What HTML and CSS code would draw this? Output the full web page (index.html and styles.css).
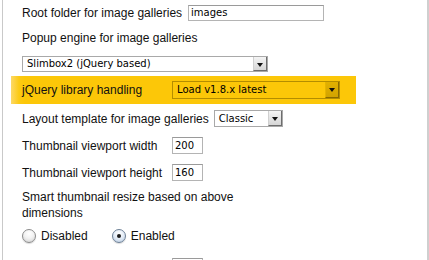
FILE: index.html
```html
<!DOCTYPE html>
<html>
<head>
<meta charset="utf-8">
<link rel="stylesheet" href="styles.css">
</head>
<body>
<div class="panel">
  <div class="row r1">
    <label class="lbl">Root folder for image galleries</label>
    <div class="input w-root">images</div>
  </div>
  <div class="row r2">
    <label class="lbl">Popup engine for image galleries</label>
  </div>
  <div class="row r3">
    <div class="select w-slim"><span class="val">Slimbox2 (jQuery based)</span><span class="arrow"></span></div>
  </div>
  <div class="row r4 hl">
    <label class="lbl">jQuery library handling</label>
    <div class="select sel-hl w-jq"><span class="val">Load v1.8.x latest</span><span class="arrow"></span></div>
  </div>
  <div class="row r5">
    <label class="lbl">Layout template for image galleries</label>
    <div class="select w-classic"><span class="val">Classic</span><span class="arrow"></span></div>
  </div>
  <div class="row r6">
    <label class="lbl">Thumbnail viewport width</label>
    <div class="input w-num">200</div>
  </div>
  <div class="row r7">
    <label class="lbl">Thumbnail viewport height</label>
    <div class="input w-num">160</div>
  </div>
  <div class="row r8 text">
    Smart thumbnail resize based on above<br>dimensions
  </div>
  <div class="row r9">
    <span class="radio"></span><span class="rlabel">Disabled</span>
    <span class="radio on"></span><span class="rlabel">Enabled</span>
  </div>
  <div class="row r10">
    <span class="lbl"></span>
    <div class="input w-num"></div>
  </div>
</div>
</body>
</html>
```
FILE: styles.css
```css
html, body {
  margin: 0;
  padding: 0;
  background: #fff;
  overflow: hidden;
}
body {
  font-family: "Liberation Sans", Arial, sans-serif;
  font-size: 12px;
  color: #111;
  width: 429px;
  height: 260px;
}
.panel {
  margin-left: 2px;
  width: 424px;
  height: 260px;
  overflow: hidden;
  border-left: 1px solid #c9c9c9;
  border-right: 2px solid #cfcfcf;
}
.row {
  display: flex;
  align-items: center;
  padding-left: 19px;
}
.lbl {
  min-width: 145px;
  margin-right: 5px;
  white-space: nowrap;
}
.r1 { margin-top: 5px; height: 16px; }
.r1 .lbl { margin-right: 6px; }
.r2 { margin-top: 9px; height: 16px; }
.r3 { margin-top: 10px; height: 16px; }
.r4 { margin-top: 4px; height: 28px; }
.r5 { margin-top: 6px; height: 17px; }
.r6 { margin-top: 10px; height: 17px; }
.r7 { margin-top: 10px; height: 17px; }
.r8 { margin-top: 8px; display: block; line-height: 16px; }
.r9 { margin-top: 8px; height: 14px; }
.r10 { margin-top: 15px; height: 17px; align-items: flex-start; }

.hl {
  margin-left: 8px;
  width: 334px;
  padding-left: 11px;
  background: linear-gradient(to right, #fdd967 0px, #fcca14 8px, #fcc708 14px);
}

.input {
  box-sizing: border-box;
  height: 17px;
  border: 1px solid #b4b4b4;
  border-top-color: #9a9a9a;
  background: #fff;
  font-family: "DejaVu Sans", sans-serif;
  font-size: 10px;
  line-height: 15px;
  padding-left: 2px;
  color: #000;
}
.w-root { width: 136px; height: 16px; line-height: 14px; }
.w-num { width: 31px; }

.select {
  box-sizing: border-box;
  display: flex;
  align-items: stretch;
  border: 1px solid #a9a9a9;
  background: #fff;
  font-family: "DejaVu Sans", sans-serif;
  font-size: 10px;
  color: #000;
  height: 17px;
}
.select .val {
  flex: 1;
  padding-left: 4px;
  line-height: 15px;
  white-space: nowrap;
  overflow: hidden;
}
.select .arrow {
  width: 14px;
  box-sizing: border-box;
  border-left: 1px solid #d0d0d0;
  border-right: 1px solid #6d6d6d;
  border-bottom: 1px solid #6d6d6d;
  background: linear-gradient(#f4f4f4, #d6d6d6);
  position: relative;
}
.select .arrow::after {
  content: "";
  position: absolute;
  left: 3px;
  top: 6px;
  border-left: 3px solid transparent;
  border-right: 3px solid transparent;
  border-top: 4px solid #111;
}
.w-slim { width: 246px; height: 16px; }
.w-slim .val { line-height: 14px; }
.w-jq { width: 168px; height: 18px; }
.w-jq .val { line-height: 16px; }
.w-classic { width: 69px; }

.sel-hl {
  background: transparent;
  border-color: #b48d00;
}
.sel-hl .arrow {
  border-left: 1px solid #e6b400;
  border-right: 1px solid #8a6a00;
  border-bottom: 1px solid #8a6a00;
  background: linear-gradient(#e2b100, #d2a300);
}

.radio {
  box-sizing: border-box;
  width: 14px;
  height: 14px;
  border-radius: 50%;
  border: 1px solid #8b8b8b;
  background: radial-gradient(circle at 50% 30%, #ffffff 0%, #f2f2f2 45%, #cfcfcf 100%);
  box-shadow: 0 1px 1px rgba(0,0,0,0.15);
  position: relative;
}
.radio.on {
  border-color: #6c7f95;
  background: radial-gradient(circle at 50% 30%, #ffffff 0%, #e6eef8 45%, #b7c9df 100%);
}
.radio.on::after {
  content: "";
  position: absolute;
  left: 4px;
  top: 4px;
  width: 4px;
  height: 4px;
  border-radius: 50%;
  background: #1a1a1a;
}
.rlabel {
  margin-left: 5px;
  margin-right: 24px;
  font-size: 12px;
}
```
